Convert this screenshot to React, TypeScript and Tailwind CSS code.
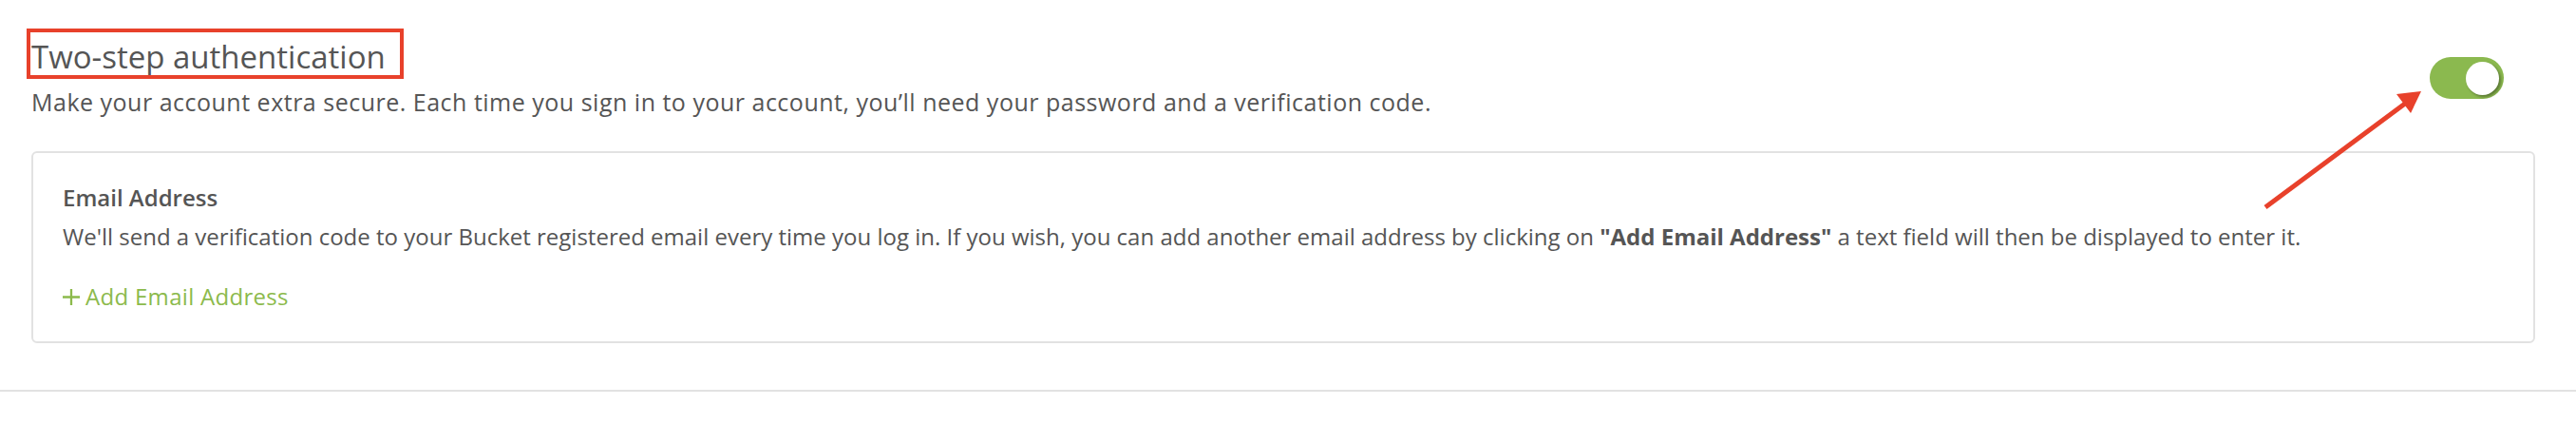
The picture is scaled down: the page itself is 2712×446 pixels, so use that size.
import React from "react"

function Toggle() {
    return (
        <div className="mt-[60px] mr-[33px] flex h-[44px] w-[78px] items-center justify-end rounded-full bg-[#8bb94f] pr-[5px]">
            <div className="h-[35px] w-[35px] rounded-full bg-white shadow-[2px_2px_3px_rgba(0,0,0,0.35)]" />
        </div>
    )
}

function PlusIcon() {
    return (
        <svg width="18" height="17" viewBox="0 0 18 17" className="shrink-0">
            <path d="M9 0v17M0 8.5h18" stroke="#8cba4c" strokeWidth="2.3" />
        </svg>
    )
}

export default function App() {
    return (
        <div className="relative h-[446px] w-[2712px] overflow-hidden bg-white font-['Open_Sans',sans-serif] text-[#555555]">
            <section className="border-b-2 border-[#e2e2e2] pb-[49px] pl-[33px] pr-[43px]">
                <div className="flex items-start justify-between">
                    <div>
                        <h2 className="pt-[40px] text-[33px] leading-[40px]">Two-step authentication</h2>
                        <p className="mt-[11px] text-[25px] leading-[32px] tracking-[0.5px]">
                            Make your account extra secure. Each time you sign in to your account, you’ll need your password and a verification code.
                        </p>
                    </div>
                    <Toggle />
                </div>

                <div className="mt-[36px] rounded-[6px] border-2 border-[#e2e2e2] px-[31px] pt-[31px] pb-[31px]">
                    <h3 className="text-[24px] font-semibold leading-[32px]">Email Address</h3>
                    <p className="mt-[9px] text-[24px] leading-[32px]">
                        We'll send a verification code to your Bucket registered email every time you log in. If you wish, you can add another email address by clicking on{" "}
                        <strong className="font-bold">"Add Email Address"</strong> a text field will then be displayed to enter it.
                    </p>
                    <button className="mt-[31px] flex items-center gap-[6px] text-[24px] leading-[32px] tracking-[0.3px] text-[#8cba4c]">
                        <PlusIcon />
                        <span>Add Email Address</span>
                    </button>
                </div>
            </section>

            {/* annotations */}
            <div className="pointer-events-none absolute left-[28px] top-[30px] h-[53px] w-[397px] border-[4px] border-[#e8412b]" />
            <svg className="pointer-events-none absolute left-0 top-0" width="2712" height="446">
                <line x1="2385" y1="218" x2="2536" y2="106" stroke="#e8412b" strokeWidth="5" />
                <polygon points="2523,99 2549,96 2538,119" fill="#e8412b" />
            </svg>
        </div>
    )
}
